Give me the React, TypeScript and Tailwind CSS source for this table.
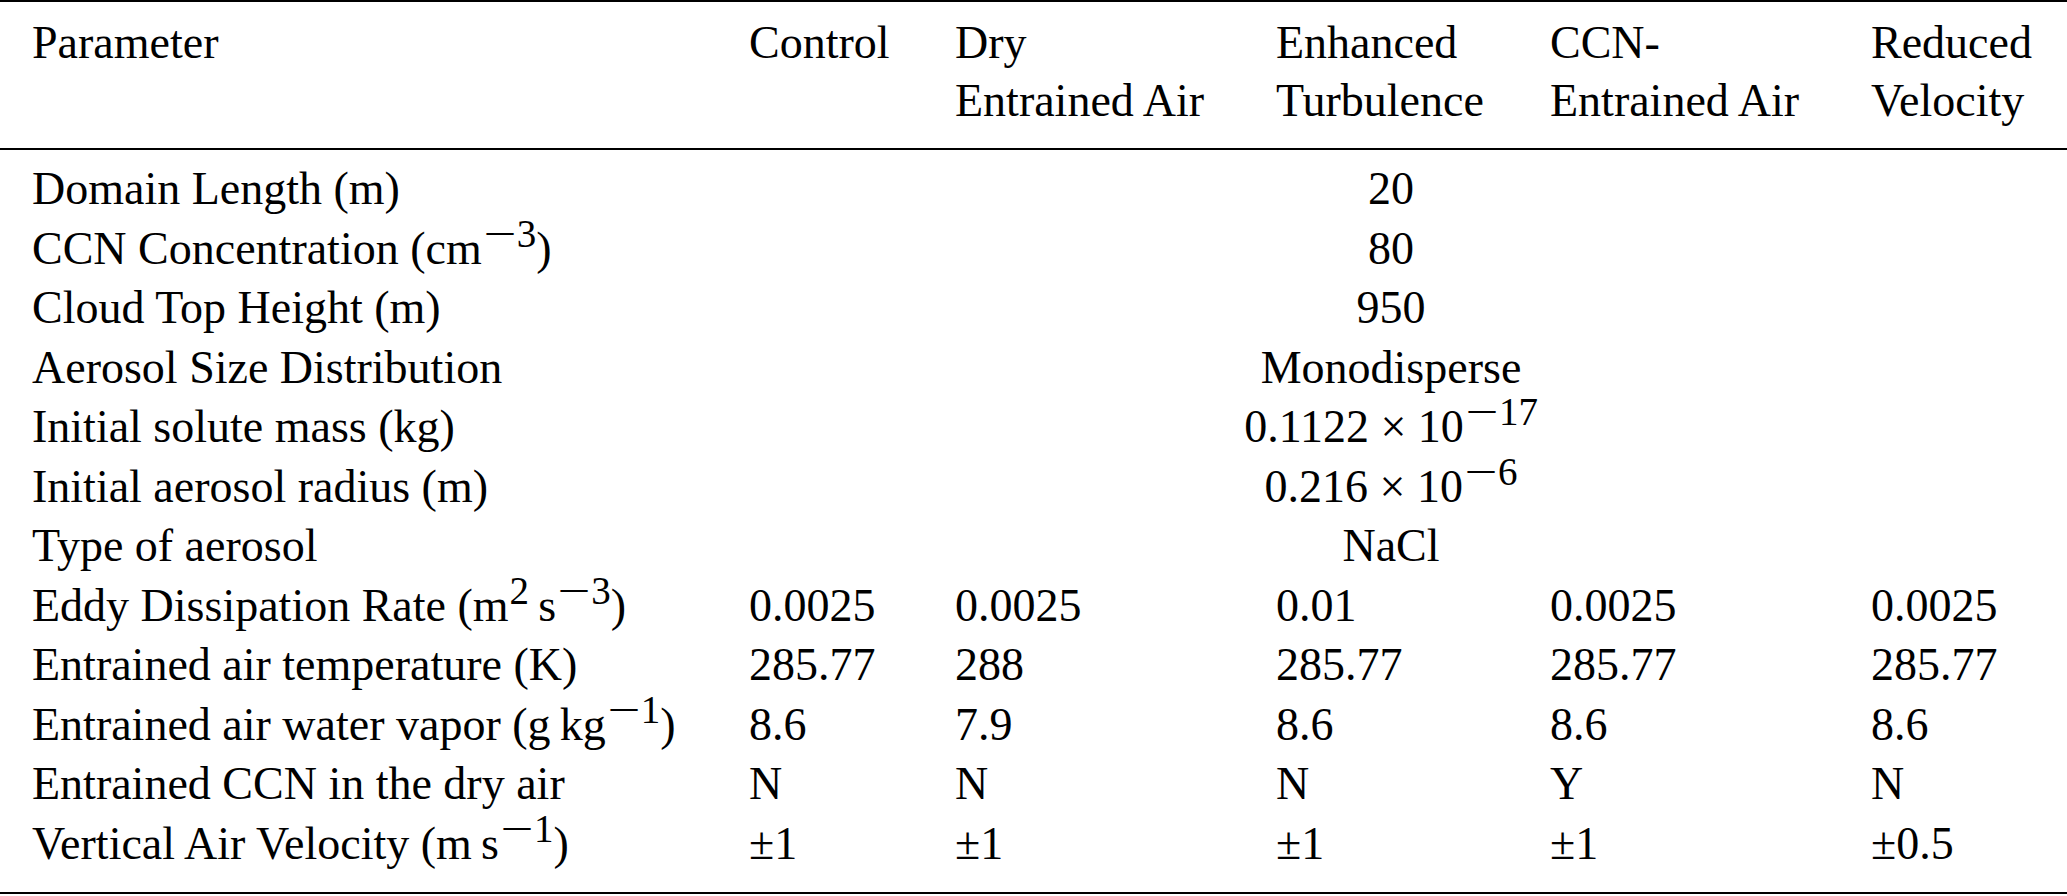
const cols = 'grid grid-cols-[749px_206px_321px_274px_321px_196px]'

// superscript sized like the math superscripts in the source table
function Sup({ children }: { children: string }) {
  const neg = children.startsWith('−')
  const digits = neg ? children.slice(1) : children
  return (
    <sup className="text-[39px] top-[-17px] ml-[1px]">
      {neg && <span className="inline-block scale-x-150 mx-[6px]">−</span>}
      {digits}
    </sup>
  )
}

type Row = {
  label: React.ReactNode
  span?: React.ReactNode
  values?: React.ReactNode[]
}

const rows: Row[] = [
  { label: 'Domain Length (m)', span: '20' },
  {
    label: (
      <>
        CCN Concentration (cm<Sup>−3</Sup>)
      </>
    ),
    span: '80',
  },
  { label: 'Cloud Top Height (m)', span: '950' },
  { label: 'Aerosol Size Distribution', span: 'Monodisperse' },
  {
    label: 'Initial solute mass (kg)',
    span: (
      <>
        0.1122 × 10<Sup>−17</Sup>
      </>
    ),
  },
  {
    label: 'Initial aerosol radius (m)',
    span: (
      <>
        0.216 × 10<Sup>−6</Sup>
      </>
    ),
  },
  { label: 'Type of aerosol', span: 'NaCl' },
  {
    label: (
      <>
        Eddy Dissipation Rate (m<Sup>2</Sup>{'\u2009'}s<Sup>−3</Sup>)
      </>
    ),
    values: ['0.0025', '0.0025', '0.01', '0.0025', '0.0025'],
  },
  {
    label: 'Entrained air temperature (K)',
    values: ['285.77', '288', '285.77', '285.77', '285.77'],
  },
  {
    label: (
      <>
        Entrained air water vapor (g{'\u2009'}kg<Sup>−1</Sup>)
      </>
    ),
    values: ['8.6', '7.9', '8.6', '8.6', '8.6'],
  },
  {
    label: 'Entrained CCN in the dry air',
    values: ['N', 'N', 'N', 'Y', 'N'],
  },
  {
    label: (
      <>
        Vertical Air Velocity (m{'\u2009'}s<Sup>−1</Sup>)
      </>
    ),
    values: ['±1', '±1', '±1', '±1', '±0.5'],
  },
]

const headers: string[][] = [
  ['Control'],
  ['Dry', 'Entrained Air'],
  ['Enhanced', 'Turbulence'],
  ['CCN-', 'Entrained Air'],
  ['Reduced', 'Velocity'],
]

export default function App() {
  return (
    <div className="w-[2067px] h-[896px] bg-white text-black font-['Liberation_Serif','Times_New_Roman',serif] text-[46px]">
      {/* Header */}
      <div className={`${cols} border-t-2 border-b-2 border-black pt-[12px] pb-[18px] leading-[58px]`}>
        <div className="pl-8">Parameter</div>
        {headers.map((lines, i) => (
          <div key={i} className="whitespace-nowrap">
            {lines.map((l) => (
              <div key={l}>{l}</div>
            ))}
          </div>
        ))}
      </div>

      {/* Body */}
      <div className="border-b-2 border-black pt-[9px] pb-[19px] leading-[59.5px]">
        {rows.map((row, i) => (
          <div key={i} className={cols}>
            <div className="pl-8 whitespace-nowrap">{row.label}</div>
            {row.span ? (
              <div className="col-span-5 text-center pr-[34px] whitespace-nowrap">{row.span}</div>
            ) : (
              row.values?.map((v, j) => (
                <div key={j} className="whitespace-nowrap">
                  {v}
                </div>
              ))
            )}
          </div>
        ))}
      </div>
    </div>
  )
}
